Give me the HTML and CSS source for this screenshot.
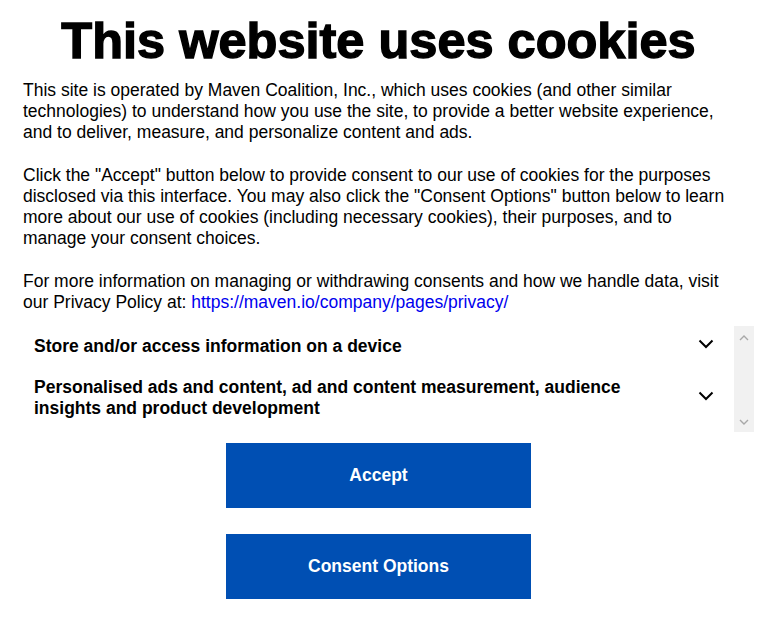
FILE: index.html
```html
<!DOCTYPE html>
<html lang="en">
<head>
<meta charset="utf-8">
<title>This website uses cookies</title>
<link rel="stylesheet" href="styles.css">
</head>
<body>
<main class="dialog">
  <h1 class="title">This website uses cookies</h1>
  <p class="text">This site is operated by Maven Coalition, Inc., which uses cookies (and other similar technologies) to understand how you use the site, to provide a better website experience, and to deliver, measure, and personalize content and ads.</p>
  <p class="text">Click the "Accept" button below to provide consent to our use of cookies for the purposes disclosed via this interface. You may also click the "Consent Options" button below to learn more about our use of cookies (including necessary cookies), their purposes, and to manage your consent choices.</p>
  <p class="text last">For more information on managing or withdrawing consents and how we handle data, visit our Privacy Policy at: <a class="link" href="#">https://maven.io/company/pages/privacy/</a></p>
  <div class="purposes">
    <div class="purpose-list">
      <div class="purpose">
        <span class="purpose-label">Store and/or access information on a device</span>
        <svg class="chev" viewBox="0 0 16 10" width="16" height="10"><path d="M1.5 1.5 L8 8 L14.5 1.5" fill="none" stroke="#000" stroke-width="2"/></svg>
      </div>
      <div class="purpose">
        <span class="purpose-label">Personalised ads and content, ad and content measurement, audience insights and product development</span>
        <svg class="chev" viewBox="0 0 16 10" width="16" height="10"><path d="M1.5 1.5 L8 8 L14.5 1.5" fill="none" stroke="#000" stroke-width="2"/></svg>
      </div>
    </div>
    <div class="scrollbar">
      <svg class="sb-arrow" viewBox="0 0 10 6" width="10" height="6"><path d="M1 5 L5 1 L9 5" fill="none" stroke="#a8a8a8" stroke-width="1.4"/></svg>
      <svg class="sb-arrow" viewBox="0 0 10 6" width="10" height="6"><path d="M1 1 L5 5 L9 1" fill="none" stroke="#a8a8a8" stroke-width="1.4"/></svg>
    </div>
  </div>
  <div class="actions">
    <button class="btn">Accept</button>
    <button class="btn">Consent Options</button>
  </div>
</main>
</body>
</html>
```
FILE: styles.css
```css
html, body {
  margin: 0;
  padding: 0;
  background: #fff;
}
body {
  font-family: "Liberation Sans", Arial, sans-serif;
  color: #000;
}
.dialog {
  width: 711px;
  padding: 12px 0 0 23px;
}
.title {
  margin: 0 0 11px;
  font-size: 50.5px;
  font-weight: 700;
  text-align: center;
  line-height: 57px;
  -webkit-text-stroke: 1.4px #000;
}
.text {
  margin: 0 0 22px;
  font-size: 17.5px;
  line-height: 21px;
}
.text.last {
  margin-bottom: 13px;
}
.link {
  color: #0000ee;
  text-decoration: none;
}
.purposes {
  display: flex;
  margin-right: -20px;
  height: 106px;
}
.purpose-list {
  flex: 1;
  overflow: hidden;
}
.purpose {
  display: flex;
  align-items: center;
  justify-content: space-between;
  padding: 10px 20px 10px 11px;
  gap: 40px;
}
.purpose-label {
  font-size: 17.5px;
  font-weight: 700;
  line-height: 21px;
}
.chev {
  flex: none;
  margin-bottom: 5px;
}
.scrollbar {
  width: 20px;
  flex: none;
  background: #f1f1f1;
  display: flex;
  flex-direction: column;
  justify-content: space-between;
  align-items: center;
  padding: 9px 0 7px;
  box-sizing: border-box;
}
.actions {
  display: flex;
  flex-direction: column;
  align-items: center;
  gap: 26px;
  margin-top: 11px;
}
.btn {
  width: 305px;
  height: 65px;
  border: none;
  background: #004fb3;
  color: #fff;
  font-family: "Liberation Sans", Arial, sans-serif;
  font-size: 17.5px;
  font-weight: 700;
}
```
